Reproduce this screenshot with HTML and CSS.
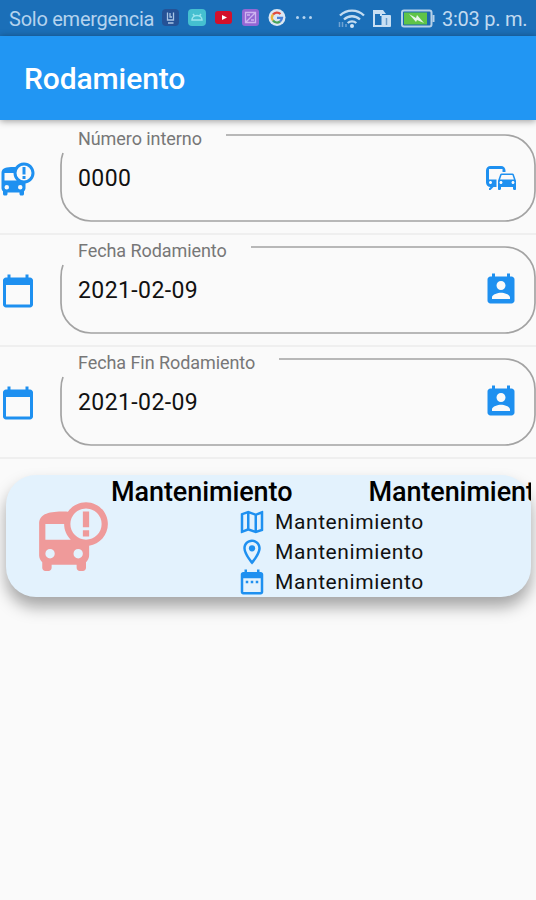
FILE: index.html
```html
<!DOCTYPE html>
<html lang="es">
<head>
<meta charset="utf-8">
<title>Rodamiento</title>
<link rel="stylesheet" href="styles.css">
</head>
<body>
<svg class="defs" width="0" height="0">
  <symbol id="bus" viewBox="0 0 24 24"><path fill-rule="evenodd" d="M16 1c-2.4 0-4.52 1.21-5.78 3.05C9.84 4 9.42 4 9 4c-4.42 0-8 .5-8 4v10c0 .88.39 1.67 1 2.22V22c0 .55.45 1 1 1h1c.55 0 1-.45 1-1v-1h8v1c0 .55.45 1 1 1h1c.55 0 1-.45 1-1v-1.78c.61-.55 1-1.34 1-2.22v-3.08c3.39-.49 6-3.39 6-6.92 0-3.87-3.13-7-7-7zM4.5 19a1.5 1.5 0 1 1 0-3 1.5 1.5 0 0 1 0 3zM3 13V8h6c0 1.96.81 3.73 2.11 5H3zm10.5 6a1.5 1.5 0 1 1 0-3 1.5 1.5 0 0 1 0 3zM16 13a5 5 0 1 1 0-10 5 5 0 0 1 0 10z"/><path d="M15 4h2v5h-2zM15 10h2v2h-2z"/></symbol>
  <symbol id="calendar" viewBox="0 0 24 24"><path d="M20 3h-1V1h-2v2H7V1H5v2H4c-1.1 0-2 .9-2 2v16c0 1.1.9 2 2 2h16c1.1 0 2-.9 2-2V5c0-1.1-.9-2-2-2zm0 18H4V8h16v13z"/></symbol>
  <symbol id="contact" viewBox="0 0 24 24"><path d="M19 3h-1V1h-2v2H8V1H6v2H5c-1.11 0-2 .9-2 2v14c0 1.1.89 2 2 2h14c1.1 0 2-.9 2-2V5c0-1.1-.9-2-2-2zm-7 3c1.66 0 3 1.34 3 3s-1.34 3-3 3-3-1.34-3-3 1.34-3 3-3zm6 12H6v-1c0-2 4-3.1 6-3.1s6 1.1 6 3.1v1z"/></symbol>
  <symbol id="commute" viewBox="0 0 24 24"><path d="M12 4H5C3.34 4 2 5.34 2 7v8c0 1.66 1.34 3 3 3l-1 1v1h1l2-2.03L9 18v-5H4V5.98L13 6v2h2V7c0-1.66-1.34-3-3-3zM5 14c.55 0 1 .45 1 1s-.45 1-1 1-1-.45-1-1 .45-1 1-1zm15.57-4.34c-.14-.4-.52-.66-.97-.66h-7.19c-.46 0-.83.26-.98.66L10 13.77l.01 5.51c0 .38.31.72.69.72h.62c.38 0 .68-.38.68-.76V18h8v1.24c0 .38.31.76.69.76h.61c.38 0 .69-.34.69-.72l.01-1.37v-4.14l-1.43-4.11zm-8.16.34h7.19l1.03 3h-9.25l1.03-3zM12 16c-.55 0-1-.45-1-1s.45-1 1-1 1 .45 1 1-.45 1-1 1zm8 0c-.55 0-1-.45-1-1s.45-1 1-1 1 .45 1 1-.45 1-1 1z"/></symbol>
  <symbol id="map" viewBox="0 0 24 24"><path d="M20.5 3l-.16.03L15 5.1 9 3 3.36 4.9c-.21.07-.36.25-.36.48V20.5c0 .28.22.5.5.5l.16-.03L9 18.9l6 2.1 5.64-1.9c.21-.07.36-.25.36-.48V3.5c0-.28-.22-.5-.5-.5zM10 5.47l4 1.4v11.66l-4-1.4V5.47zm-5 .99l3-1.01v11.7l-3 1.16V6.46zm14 11.08l-3 1.01V6.86l3-1.16v11.84z"/></symbol>
  <symbol id="place" viewBox="0 0 24 24"><path d="M12 2C8.13 2 5 5.13 5 9c0 5.25 7 13 7 13s7-7.75 7-13c0-3.87-3.13-7-7-7zM7 9c0-2.76 2.24-5 5-5s5 2.24 5 5c0 2.88-2.88 7.19-5 9.88C9.92 16.21 7 11.85 7 9z"/><circle cx="12" cy="9" r="2.5"/></symbol>
  <symbol id="range" viewBox="0 0 24 24"><path d="M9 11H7v2h2v-2zm4 0h-2v2h2v-2zm4 0h-2v2h2v-2zm2-7h-1V2h-2v2H8V2H6v2H5c-1.11 0-2 .9-2 2v14c0 1.1.89 2 2 2h14c1.1 0 2-.9 2-2V6c0-1.1-.9-2-2-2zm0 16H5V9h14v11z"/></symbol>
</svg>

<div class="status">
  <span class="carrier">Solo emergencia</span>
  <svg class="notifications" width="152" height="20" viewBox="0 0 152 20">
    <rect x="0" y="1" width="17" height="17" rx="4" fill="#255296"/>
    <path d="M5.5 4.500v7.500h6V4.500M8 5v4h2M6 15h5.500" fill="none" stroke="#a9c5e5" stroke-width="1.3"/>
    <rect x="26" y="1" width="18" height="17" rx="4" fill="#45bfd0"/>
    <path d="M30 12a5 4.500 0 0 1 10 0zM31 6l1.500 2M39 6l-1.500 2" fill="none" stroke="#9be5ee" stroke-width="1.5"/>
    <rect x="53" y="3" width="17" height="13" rx="3" fill="#d3102b"/>
    <path d="M60 7l5 2.500-5 2.500z" fill="#fff"/>
    <rect x="80" y="1" width="17" height="17" rx="3" fill="#9467d4"/>
    <path d="M83.500 4.500h10v10h-10zM84 14l9-9M85 7h3M89 12h3" fill="none" stroke="#cdb4f0" stroke-width="1.3"/>
    <circle cx="115" cy="9.500" r="8.500" fill="#dce7f3"/>
    <g fill="none" stroke-width="2.3"><path d="M111 6.500a5 5 0 0 1 7.500-.5" stroke="#e0493e"/><path d="M111 6.500a5 5 0 0 0 0 6" stroke="#e9b43c"/><path d="M111 12.500a5 5 0 0 0 7 1" stroke="#47a35b"/><path d="M115 9.800h5a5 5 0 0 1-2 3.700" stroke="#4a80d8"/></g>
    <g fill="#b4d3ef"><circle cx="135.500" cy="9.500" r="1.500"/><circle cx="142" cy="9.500" r="1.500"/><circle cx="148.500" cy="9.500" r="1.500"/></g>
  </svg>
  <svg class="system" width="98" height="22" viewBox="0 0 98 22">
    <g fill="none" stroke="#c3dcf1" stroke-width="2.3"><path d="M2 7.500a17 17 0 0 1 24 0M6 11.500a11.500 11.500 0 0 1 16 0M9.700 15a6.300 6.300 0 0 1 8.600 0"/></g>
    <circle cx="14" cy="18" r="2" fill="#d3e6f6"/>
    <path d="M1.500 14v5M4.500 14v5M8 16v3" stroke="#6fa3d3" stroke-width="1.5" fill="none"/>
    <path d="M44 18h-8V3M43 3v5" fill="none" stroke="#c8dff3" stroke-width="2"/>
    <path d="M35 2h10l3 4H35z" fill="#c8dff3"/>
    <rect x="43.500" y="7" width="9.500" height="12" rx="1" fill="#c8dff3"/><path d="M48.500 10v7" stroke="#6a9ccb" stroke-width="1.5"/>
    <rect x="64" y="2.500" width="29.500" height="16" rx="2" fill="#1b69ae" stroke="#b5d1e9" stroke-width="2"/>
    <rect x="66" y="4.500" width="23" height="12" fill="#5fc447"/><path d="M95.500 7v7" stroke="#b5d1e9" stroke-width="2"/>
    <path d="M71 6l7 4 1-3 7 8-7-3-1 2z" fill="#e5f5e8"/>
  </svg>
  <span class="time">3:03 p. m.</span>
</div>
<header class="appbar">Rodamiento</header>

<main>
  <section class="row">
    <svg class="icon lead"><use href="#bus"/></svg>
    <div class="field">
      <svg class="outline" viewBox="0 0 476 88"><path d="M166 1H445A30 30 0 0 1 475 31V57A30 30 0 0 1 445 87H31A30 30 0 0 1 1 57V31Q1 24 3 19"/></svg>
      <span class="label">Número interno</span>
      <div class="entry"><span class="value">0000</span><svg class="icon"><use href="#commute"/></svg></div>
    </div>
  </section>
  <section class="row">
    <svg class="icon lead"><use href="#calendar"/></svg>
    <div class="field">
      <svg class="outline" viewBox="0 0 476 88"><path d="M191 1H445A30 30 0 0 1 475 31V57A30 30 0 0 1 445 87H31A30 30 0 0 1 1 57V31Q1 24 3 19"/></svg>
      <span class="label">Fecha Rodamiento</span>
      <div class="entry"><span class="value">2021-02-09</span><svg class="icon"><use href="#contact"/></svg></div>
    </div>
  </section>
  <section class="row">
    <svg class="icon lead"><use href="#calendar"/></svg>
    <div class="field">
      <svg class="outline" viewBox="0 0 476 88"><path d="M219 1H445A30 30 0 0 1 475 31V57A30 30 0 0 1 445 87H31A30 30 0 0 1 1 57V31Q1 24 3 19"/></svg>
      <span class="label">Fecha Fin Rodamiento</span>
      <div class="entry"><span class="value">2021-02-09</span><svg class="icon"><use href="#contact"/></svg></div>
    </div>
  </section>

  <article class="card">
    <div class="clip">
      <svg class="bus"><use href="#bus"/></svg>
      <div class="info">
        <div class="heads"><b>Mantenimiento</b><b>Mantenimiento</b></div>
        <ul>
          <li><svg><use href="#map"/></svg><span>Mantenimiento</span></li>
          <li><svg><use href="#place"/></svg><span>Mantenimiento</span></li>
          <li><svg><use href="#range"/></svg><span>Mantenimiento</span></li>
        </ul>
      </div>
    </div>
  </article>
</main>
</body>
</html>
```
FILE: styles.css
```css
* { box-sizing: border-box; }
body {
  margin: 0;
  height: 900px;
  overflow: hidden;
  background: #fafafa;
  font-family: Roboto, "Liberation Sans", sans-serif;
  color: #111;
}
.defs { display: block; }
svg { flex: none; }
.status {
  display: flex;
  align-items: center;
  height: 36px;
  padding: 2px 0 0 9px;
  background: #1b6fb8;
  color: #b5d3ee;
  font-size: 20px;
  white-space: nowrap;
}
.carrier { width: 153px; letter-spacing: -0.25px; }
.notifications { margin-top: -2px; }
.system { margin: -1px 0 0 24px; }
.time { margin-left: 6px; color: #c2daf0; letter-spacing: -0.25px; }
.appbar {
  position: relative;
  height: 84px;
  padding-left: 24px;
  background: #2196f3;
  box-shadow: 0 1px 7px rgba(0, 0, 0, 0.4);
  color: #fff;
  font-size: 30px;
  font-weight: 500;
  letter-spacing: -0.1px;
  line-height: 86px;
}
.row {
  display: flex;
  height: 112px;
  padding-top: 11px;
  border-bottom: 2px solid #efefef;
}
.row:first-child { height: 115px; padding-top: 14px; }
.icon { width: 36px; height: 36px; fill: #1e90f0; }
.lead { margin: 27px 24px 0 0; }
.field {
  display: grid;
  width: 476px;
  height: 88px;
}
.field > * { grid-area: 1 / 1; }
.outline { width: 476px; height: 88px; }
.outline path { fill: none; stroke: #a3a3a3; stroke-width: 1.7; }
.label {
  margin: -6px 0 0 18px;
  height: 22px;
  color: #777;
  font-size: 18px;
  letter-spacing: -0.07px;
  line-height: 22px;
  white-space: nowrap;
}
.entry {
  display: flex;
  justify-content: space-between;
  align-items: center;
  height: 36px;
  margin: 26px 17px 0 18px;
}
.value { font-size: 23px; line-height: 32px; letter-spacing: 0.4px; padding-top: 1px; }
.card {
  width: 525px;
  height: 122px;
  margin: 16px 0 0 6px;
  border-radius: 30px;
  background: #e3f2fd;
  box-shadow: 0 10px 16px rgba(0, 0, 0, 0.34);
}
.clip {
  display: flex;
  height: 122px;
  overflow: hidden;
}
.bus { width: 75px; height: 75px; margin: 24px 0 0 30px; fill: #ef9a9a; }
.info { flex: none; width: 520px; }
.heads {
  display: flex;
  height: 32px;
  gap: 76px;
  color: #000;
  font-size: 27px;
  letter-spacing: -0.08px;
  line-height: 35px;
}
.heads b { font-weight: 500; }
ul { margin: 0; padding: 0 0 0 126px; list-style: none; }
li { display: flex; align-items: center; height: 30px; gap: 8px; font-size: 21px; letter-spacing: 0.6px; }
li svg { width: 30px; height: 30px; fill: #1e90f0; }
```
